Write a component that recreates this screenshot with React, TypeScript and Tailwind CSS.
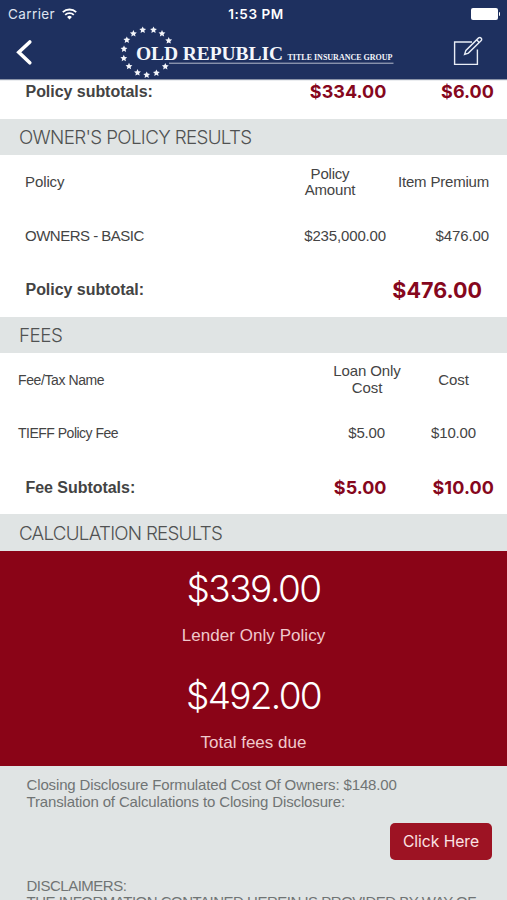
import React from "react";

const STARS: [number, number][] = [
  [142.7, 30], [153.5, 30], [162, 33.6], [168.7, 40.7], [133.4, 33.6], [126.8, 40],
  [124, 49], [123.8, 58.4], [129, 66.4], [137.5, 72.7], [146.7, 75], [156.4, 73], [165.3, 66.5],
];

function starPoints(cx: number, cy: number) {
  return Array.from({ length: 10 }, (_, i) => {
    const r = i % 2 ? 1.7 : 3.6;
    const a = (Math.PI / 5) * i - Math.PI / 2;
    return `${(cx + r * Math.cos(a)).toFixed(2)},${(cy + r * Math.sin(a)).toFixed(2)}`;
  }).join(" ");
}

function Logo() {
  return (
    <svg className="h-[53px] w-[280px] shrink-0" viewBox="119 26 280 53" fill="#f4f6fb">
      {STARS.map(([x, y]) => (
        <polygon key={`${x}-${y}`} points={starPoints(x, y)} />
      ))}
      <text x="136" y="59.6" fontSize="19.5" fontWeight="700" textLength="147" fontFamily="'Liberation Serif', serif">
        OLD REPUBLIC
      </text>
      <text x="287.5" y="59.8" fontSize="9" fontWeight="700" textLength="105" lengthAdjust="spacingAndGlyphs" fontFamily="'Liberation Serif', serif">
        TITLE INSURANCE GROUP
      </text>
      <rect x="169" y="62.7" width="224.5" height="1" opacity="0.7" />
    </svg>
  );
}

function StatusBar() {
  return (
    <div className="grid h-[26px] grid-cols-3 items-center pt-[2px] font-['Inter',sans-serif] text-[13.5px] text-white">
      <div className="flex items-center gap-[7px] pl-[8px]">
        <span className="tracking-[0.4px] text-[#dfe4f0]">Carrier</span>
        <svg className="h-[12px] w-[15px]" viewBox="0 0 15 12" fill="none" stroke="#fff" strokeWidth="1.8">
          <path d="M0.8 4.2 A9.6 9.6 0 0 1 14.2 4.2" />
          <path d="M3.2 6.8 A6.2 6.2 0 0 1 11.8 6.8" />
          <path d="M7.5 11.4 L5.1 8.9 A3.6 3.6 0 0 1 9.9 8.9 Z" fill="#fff" stroke="none" />
        </svg>
      </div>
      <span className="pl-[5px] text-center font-semibold tracking-[0.55px]">1:53 PM</span>
      <div className="flex items-center justify-end pr-[7px]">
        <div className="h-[12px] w-[27px] rounded-[2px] bg-white" />
        <div className="ml-px h-[4px] w-[1.5px] rounded-r bg-white" />
      </div>
    </div>
  );
}

function Header() {
  return (
    <header className="relative z-10 h-[79px] bg-[#1e305f] shadow-[0_1px_1px_#8a93a8]">
      <StatusBar />
      <div className="flex h-[53px] items-start">
        <svg className="mt-[13px] ml-[15px] h-[27px] w-[18px] shrink-0" viewBox="0 0 18 27" fill="none" stroke="#fff" strokeWidth="3.6" strokeLinecap="round">
          <path d="M14.8 3 L3.8 13.3 L14.8 23.8" />
        </svg>
        <div className="ml-[86px]">
          <Logo />
        </div>
        <svg className="mt-[10px] ml-[54px] h-[30px] w-[30px] shrink-0" viewBox="453 36 30 30" fill="none" stroke="#e9edf6" strokeWidth="1.4">
          <path d="M472 42 H454.6 V64.4 H477.4 V49.5" />
          <path d="M464.6 54.4 L465.9 50.4 L478.6 37.9 Q480 36.9 481.2 38.2 Q482.2 39.6 481 40.8 L468.4 53.1 Z M476.6 39.8 L479.2 42.6" />
        </svg>
      </div>
    </header>
  );
}

function Band({ children, tracking }: { children: React.ReactNode; tracking: string }) {
  return (
    <h2 className={`flex h-[36.5px] items-center bg-[#e0e4e4] pt-[2.5px] pl-[19px] font-['Inter',sans-serif] text-[18.8px] font-light text-[#505252] ${tracking}`}>
      {children}
    </h2>
  );
}

const row = "flex h-[53.8px] items-center text-[15px] leading-[16.5px] text-[#444444]";
const label = "flex-1 pl-[25.5px] pt-px text-[16px] font-bold text-[#434343] tracking-[-0.04px]";
const amount = "pt-[2px] font-['Inter',sans-serif] text-[18px] font-bold text-[#86071d] text-right";

export default function App() {
  return (
    <div className="h-[900px] w-[507px] overflow-hidden bg-white font-['Liberation_Sans',Arial,sans-serif]">
      <Header />
      <div className={`${row} -mt-[14.2px]`}>
        <span className={label}>Policy subtotals:</span>
        <span className={`${amount} w-[100px] tracking-[0.05px]`}>$334.00</span>
        <span className={`${amount} w-[108px] pr-[13px] box-content -ml-[0.5px] tracking-[0.05px]`}>$6.00</span>
      </div>

      <Band tracking="tracking-[-0.65px]">OWNER'S POLICY RESULTS</Band>
      <div className={row}>
        <span className="flex-1 pl-[25px] tracking-[-0.1px]">Policy</span>
        <span className="w-[60px] text-center tracking-[-0.2px]">Policy Amount</span>
        <span className="w-[129px] pr-[18px] box-content text-right tracking-[-0.2px]">Item Premium</span>
      </div>
      <div className={row}>
        <span className="flex-1 pl-[25px] tracking-[-0.5px]">OWNERS - BASIC</span>
        <span className="w-[100px] text-right tracking-[-0.15px]">$235,000.00</span>
        <span className="w-[103px] pr-[18px] box-content text-right tracking-[-0.1px]">$476.00</span>
      </div>
      <div className={row}>
        <span className={label}>Policy subtotal:</span>
        <span className="pt-[2px] pr-[25px] font-['Inter',sans-serif] text-[21.5px] font-bold text-[#86071d]">$476.00</span>
      </div>

      <Band tracking="tracking-[-0.5px]">FEES</Band>
      <div className={row}>
        <span className="flex-1 pl-[18px] text-[14px] tracking-[-0.4px]">Fee/Tax Name</span>
        <span className="w-[72px] text-center tracking-[-0.1px]">Loan Only Cost</span>
        <span className="w-[66px] pr-[38px] box-content text-right">Cost</span>
      </div>
      <div className={row}>
        <span className="flex-1 pl-[18px] text-[14px] tracking-[-0.5px]">TIEFF Policy Fee</span>
        <span className="w-[60px] text-right tracking-[-0.15px]">$5.00</span>
        <span className="w-[91px] pr-[31px] box-content text-right tracking-[-0.15px]">$10.00</span>
      </div>
      <div className={row}>
        <span className={label}>Fee Subtotals:</span>
        <span className={`${amount} w-[60px]`}>$5.00</span>
        <span className={`${amount} w-[107.5px] pr-[13px] box-content tracking-[0.1px]`}>$10.00</span>
      </div>

      <Band tracking="tracking-[-0.75px]">CALCULATION RESULTS</Band>
      <section className="flex h-[215px] flex-col items-center bg-[#8a0417] pt-[14.5px] text-[#f0c9cc]">
        <div className="h-[48px] font-['Inter',sans-serif] text-[37px] leading-[48px] font-light tracking-[-1.5px] text-white">$339.00</div>
        <div className="mt-[13px] h-[20px] text-[17px] leading-[20px] tracking-[0.05px]">Lender Only Policy</div>
        <div className="mt-[26px] h-[48px] font-['Inter',sans-serif] text-[37px] leading-[48px] font-light tracking-[-1.7px] text-white">$492.00</div>
        <div className="mt-[13px] h-[20px] text-[17px] leading-[20px]">Total fees due</div>
      </section>

      <section className="h-[136px] bg-[#e0e4e4] pt-[10px] pl-[26.5px] text-[15px] leading-[17px] text-[#707474]">
        <p className="whitespace-nowrap tracking-[-0.14px]">Closing Disclosure Formulated Cost Of Owners: $148.00</p>
        <p className="whitespace-nowrap tracking-[-0.14px]">Translation of Calculations to Closing Disclosure:</p>
        <div className="mt-[13px] flex justify-end pr-[15px]">
          <button className="h-[37px] w-[102px] rounded-[5px] bg-[#9d1323] font-['Inter',sans-serif] text-[15.7px] tracking-[-0.05px] text-[#fbe3e4]">
            Click Here
          </button>
        </div>
        <p className="mt-[17px] tracking-[-0.5px]">DISCLAIMERS:</p>
        <p className="-mt-px whitespace-nowrap tracking-[-0.5px]">THE INFORMATION CONTAINED HEREIN IS PROVIDED BY WAY OF</p>
      </section>
    </div>
  );
}
